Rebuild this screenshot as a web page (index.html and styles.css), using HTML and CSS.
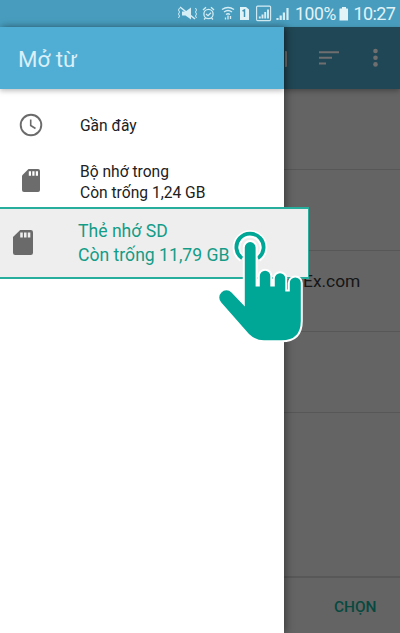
FILE: index.html
```html
<!DOCTYPE html>
<html lang="vi">
<head>
<meta charset="utf-8">
<title>Mở từ</title>
<link rel="stylesheet" href="styles.css">
</head>
<body>
<div class="phone">
  <header class="status">
    <svg class="status-icons" width="120" height="27" viewBox="0 0 120 27" fill="none" stroke="#d5edf5" stroke-width="1.3">
      <path d="M12 11.500h3.500l5.500-4v12l-5.500-4H12z" fill="#d5edf5" stroke="none"/>
      <path d="M10 7l15 12" stroke-width="1.600"/>
      <path d="M9.500 8l-1 2 1 2-1 2 1 2-1 2M25.500 8l1 2-1 2 1 2-1 2 1 2" stroke-width="1"/>
      <circle cx="38.500" cy="14" r="4.600"/>
      <path d="M36 14l2 1.700 3-3M33 10l3-2.700M41 7.300l3 2.700M35.500 18l-1.500 1.500M41.500 18l1.500 1.500"/>
      <path d="M52 9.500q6-4 12 0M54 12q4-3 8 0M56 14.500q2-1.500 4 0" />
      <path d="M58 15.500v4M55.500 17.500v2M60.500 16v3"/>
      <path d="M70 7h6l3 2.500V20H70z" fill="#e2f3f8" stroke="none"/>
      <path d="M72.500 11l2-1v7" stroke="#4193b2" stroke-width="1.500"/>
      <rect x="86.600" y="6.100" width="14" height="14.500" rx="1" stroke-width="1.100"/>
      <path d="M89.800 18.500v-2M92.500 18.500v-4M95.200 18.500v-6.500M98 18.500V9.500" stroke-width="1.900"/>
      <path d="M107.500 20v-2M110.700 20v-4.500M113.900 20v-7.500M117.500 20V8" stroke-width="2.200"/>
    </svg>
    <span class="percent">100%</span>
    <svg class="battery" width="10" height="14" viewBox="0 0 10 14"><path d="M3 0h4v1.500h1.500q.5 0 .5.500v11.500H.5V2q0-.5.500-.5h2z" fill="#e2f3f8"/></svg>
    <span class="time">10:27</span>
  </header>
  <main class="stage">
    <section class="backdrop">
      <div class="toolbar">
        <svg width="115" height="62" viewBox="0 0 115 62" fill="#706f70">
          <rect x="-6" y="24" width="8" height="16" rx="1"/>
          <path d="M34 24.200h20v2H34zM34 29.800h13v2H34zM34 35.400h7v2h-7z"/>
          <circle cx="90.500" cy="24" r="2.300"/><circle cx="90.500" cy="30.700" r="2.300"/><circle cx="90.500" cy="37.400" r="2.300"/>
        </svg>
      </div>
      <div class="files">
        <div class="file"></div>
        <div class="file"></div>
        <div class="file named">Ex.com</div>
        <div class="file"></div>
        <div class="file last"></div>
      </div>
      <footer class="actions">CHỌN</footer>
    </section>
    <aside class="drawer">
      <h1 class="title">Mở từ</h1>
      <nav class="roots">
        <div class="root recent">
          <svg class="icon" width="24" height="24" viewBox="0 0 24 24" fill="none" stroke="#6b6b6b" stroke-width="1.900"><circle cx="12" cy="12" r="10.300"/><path d="M11.700 6.500v6l4.800 3" stroke-width="1.600"/></svg>
          <div>Gần đây</div>
        </div>
        <div class="root internal">
          <svg class="icon" width="18" height="23" viewBox="0 0 18 23"><path d="M6.500 0H16q2 0 2 2v19q0 2-2 2H2q-2 0-2-2V6.500z" fill="#6c6c6c"/><path d="M6.800 2.300h2.200v4.400H6.800zm3.500 0h2.200v4.400h-2.200zm3.500 0h2.200v4.400h-2.200z" fill="#fff"/></svg>
          <div>Bộ nhớ trong<br>Còn trống 1,24 GB</div>
        </div>
        <div class="root selected">
          <svg class="icon" width="20" height="25" viewBox="0 0 18 23" preserveAspectRatio="none"><path d="M6.500 0H16q2 0 2 2v19q0 2-2 2H2q-2 0-2-2V6.500z" fill="#6a6a6a"/><path d="M6.500 2.400h2.300v4.500H6.500zm3.400 0h2.300v4.500H9.900zm3.400 0h2.300v4.500h-2.300z" fill="#eee"/></svg>
          <div>Thẻ nhớ SD<br>Còn trống 11,79 GB</div>
        </div>
      </nav>
    </aside>
    <svg class="pointer" width="96" height="122" viewBox="214 226 96 122">
      <path d="M242 258.500A13.600 13.600 0 1 1 258 258.500" fill="none" stroke="#fff" stroke-width="7.500"/>
      <path d="M242.200 258.300A13.600 13.600 0 1 1 257.800 258.300" fill="none" stroke="#00a796" stroke-width="3.800"/>
      <path d="M244.800 306.500V247.500a5.400 5.400 0 0 1 10.800 0V286.500h4.200V276a5.200 5.200 0 0 1 10.500 0V286.500h4.500V278.500a5.200 5.200 0 0 1 10.500 0V291.500h4.500V283a5.500 5.500 0 0 1 11 0V321Q300.800 340.300 281.500 340.300H264Q255.500 340.300 249 334L221.300 302.500A7 7 0 0 1 231.500 292.500Z" fill="#00a796" stroke="#fff" stroke-width="4" paint-order="stroke" stroke-linejoin="round"/>
    </svg>
  </main>
</div>
</body>
</html>
```

FILE: styles.css
```css
* {
  box-sizing: border-box;
}

body {
  margin: 0;
  font-family: Roboto, sans-serif;
}

.phone {
  width: 400px;
  height: 633px;
  overflow: hidden;
  display: flex;
  flex-direction: column;
  background: #646464;
}

.status {
  height: 27px;
  flex: none;
  display: flex;
  align-items: center;
  background: #489dbe;
  color: #e2f3f8;
  padding-left: 170px;
  font-size: 18px;
  white-space: nowrap;
}

.status-icons {
  flex: none;
}

.percent {
  width: 44px;
  padding-left: 5px;
  font-size: 17.5px;
  letter-spacing: -0.3px;
}

.battery {
  margin: 0 5px 0 4.5px;
  flex: none;
}

.time {
  font-size: 18px;
  letter-spacing: -0.6px;
}

.stage {
  position: relative;
  flex: 1;
}

.backdrop {
  height: 100%;
  padding-left: 284px;
  display: flex;
  flex-direction: column;
}

.toolbar {
  height: 62px;
  flex: none;
  padding-left: 1px;
  background: #204755;
  box-shadow: 0 2px 5px rgba(0, 0, 0, .3);
}

.toolbar svg {
  display: block;
}

.file {
  height: 81px;
  border-bottom: 1px solid #575757;
}

.file.named {
  padding: 19px 0 0 19px;
  font-size: 17.4px;
  line-height: 22px;
  color: #161616;
}

.file.last {
  height: 165px;
  border-bottom: 2px solid #585858;
}

.actions {
  flex: 1;
  padding: 19px 0 0 50px;
  font-size: 15.4px;
  line-height: 20px;
  font-weight: 500;
  color: #07493f;
}

.drawer {
  position: absolute;
  top: 0;
  left: 0;
  width: 284px;
  height: 606px;
  background: #fff;
  box-shadow: 2px 0 8px rgba(0, 0, 0, .4);
}

.title {
  height: 62px;
  margin: 0;
  padding: 3px 0 0 18px;
  background: #50aed4;
  color: #daeff7;
  font-size: 22.3px;
  line-height: 58px;
  font-weight: 400;
  box-shadow: 0 2px 5px rgba(0, 0, 0, .25);
}

.root {
  display: flex;
  align-items: center;
  font-size: 15.6px;
  line-height: 21px;
  color: #212121;
  white-space: nowrap;
}

.icon {
  flex: none;
}

.recent {
  height: 70px;
  padding: 4px 0 0 19px;
  gap: 37px;
}

.recent .icon {
  margin-bottom: 3px;
}

.internal {
  height: 48px;
  padding: 0 0 1px 22px;
  gap: 40px;
}

.internal .icon {
  margin-bottom: 4px;
}

.selected {
  width: 309px;
  height: 72px;
  padding-left: 13px;
  gap: 45px;
  background: #eee;
  border: solid #27ae9d;
  border-width: 2px 1px 2px 0;
  color: #149c87;
  font-size: 17.6px;
  line-height: 24px;
}

.selected .icon {
  margin-bottom: 2px;
}

.pointer {
  position: absolute;
  left: 214px;
  top: 199px;
}
```
